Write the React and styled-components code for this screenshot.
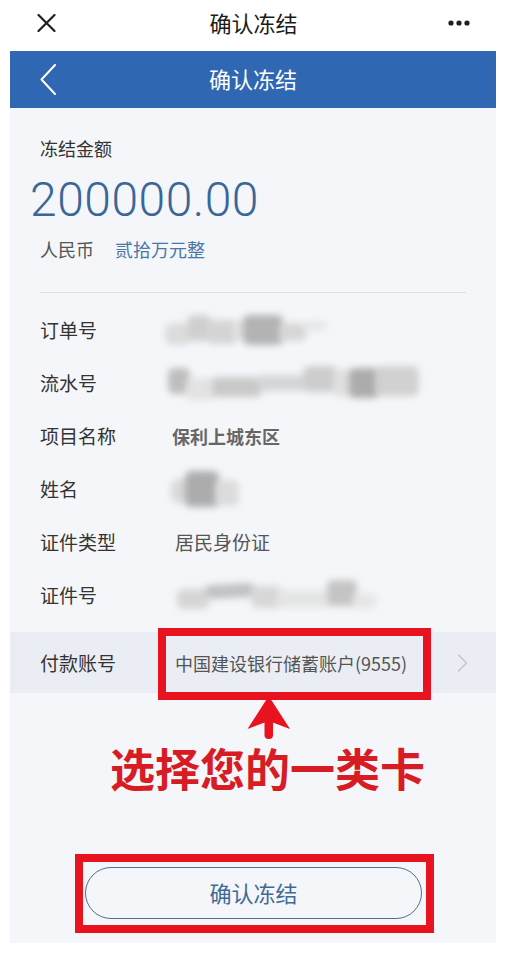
import React from "react";
import styled, { createGlobalStyle } from "styled-components";

const GlobalStyle = createGlobalStyle`
  html, body {
    margin: 0;
    padding: 0;
    background: #ffffff;
    font-family: "Noto Sans CJK SC", "Noto Sans", sans-serif;
  }
  * { box-sizing: border-box; }
`;

const Page = styled.div`
  width: 506px;
  height: 953px;
  background: #fff;
  overflow: hidden;
`;

const TopBar = styled.header`
  height: 46px;
  display: grid;
  grid-template-columns: 1fr auto 1fr;
  align-items: center;
  padding: 0 36px 0 37px;
`;

const TopTitle = styled.div`
  font-size: 22px;
  line-height: 1;
  padding-bottom: 3px;
  color: #1b1b1b;
`;

const IconSlot = styled.div`
  display: flex;
  justify-content: ${(p) => (p.$end ? "flex-end" : "flex-start")};
  align-items: center;
`;

const Frame = styled.main`
  margin: 5px 10px 0;
  background: #f4f6f9;
  padding-bottom: 10px;
`;

const NavBar = styled.nav`
  height: 57px;
  background: #2f67b2;
  display: grid;
  grid-template-columns: 60px 1fr 60px;
  align-items: center;
`;

const BackSlot = styled.div`
  padding-left: 30px;
  display: flex;
  align-items: center;
`;

const NavTitle = styled.div`
  text-align: center;
  color: #ffffff;
  font-size: 22px;
  line-height: 1;
  padding-bottom: 3px;
`;

const AmountSection = styled.section`
  padding: 27px 30px 0;
`;

const Heading = styled.div`
  font-size: 18px;
  line-height: 26px;
  color: #333;
`;

const Amount = styled.div`
  font-family: Roboto, "Liberation Sans", sans-serif;
  font-weight: 300;
  font-size: 48px;
  line-height: 56px;
  margin: 11px 0 0 -10px;
  color: #3a6698;
  letter-spacing: 0.5px;
`;

const CurrencyLine = styled.div`
  margin-top: 8px;
  display: flex;
  gap: 21px;
  font-size: 18px;
  line-height: 26px;
`;

const Currency = styled.span`
  color: ${(p) => (p.$accent ? "#4a76a8" : "#555")};
`;

const Divider = styled.hr`
  margin: 30px 30px 0;
  border: none;
  height: 1px;
  background: #dcdee2;
`;

const RowList = styled.div`
  padding-top: 10px;
  display: flex;
  flex-direction: column;
`;

const Row = styled.div`
  position: relative;
  display: grid;
  grid-template-columns: 135px 1fr auto;
  align-items: center;
  height: ${(p) => (p.$tall ? "61px" : "53px")};
  margin-top: ${(p) => (p.$tall ? "11px" : "0")};
  padding: 0 28px 0 30px;
  background: ${(p) => (p.$highlight ? "#eaedf3" : "transparent")};
`;

const Label = styled.div`
  font-size: 19px;
  line-height: 26px;
  color: #333;
`;

const Value = styled.div`
  font-size: ${(p) => (p.$small ? "18px" : "19px")};
  line-height: 26px;
  color: ${(p) => (p.$bold ? "#666" : "#555")};
  font-weight: ${(p) => (p.$bold ? 700 : 400)};
  margin-left: ${(p) => (p.$bold ? "-3px" : "0")};
  white-space: nowrap;
`;

const Redacted = styled.div`
  display: flex;
  align-items: center;
  margin-left: ${(p) => p.$shift}px;
  height: 46px;
`;

const Blob = styled.span`
  display: block;
  flex: none;
  width: ${(p) => p.$w}px;
  height: ${(p) => p.$h}px;
  margin-right: -4px;
  border-radius: 6px;
  background: ${(p) => p.$c};
  transform: translateY(${(p) => p.$dy || 0}px) rotate(${(p) => p.$r || 0}deg);
  filter: blur(3.5px);
  opacity: 0.85;
`;

const Callout = styled.div`
  position: absolute;
  left: 148px;
  top: -4px;
  width: 273px;
  height: 72px;
  border: 8px solid #e8131e;
  pointer-events: none;
`;

const ArrowMark = styled.svg`
  position: absolute;
  left: 237px;
  top: 63px;
`;

const Hint = styled.div`
  margin-top: 48px;
  text-align: center;
  padding-left: 29px;
  font-size: 45px;
  line-height: 54px;
  font-weight: 700;
  color: #d71c24;
`;

const ButtonArea = styled.div`
  margin-top: 59px;
  padding-left: 65px;
`;

const ButtonBox = styled.div`
  width: 359px;
  height: 79px;
  border: 8px solid #e8131e;
  padding: 5px 4px 6px 2px;
`;

const PillButton = styled.button`
  width: 100%;
  height: 100%;
  border: 1.5px solid #4b7099;
  border-radius: 26px;
  background: transparent;
  font-family: "Noto Sans CJK SC", sans-serif;
  font-size: 22px;
  color: #3f6a97;
  padding: 0 0 2px;
`;

const blobs = {
  order: [
    { w: 26, h: 22, c: "#d8d8d8", dy: 4 },
    { w: 24, h: 26, c: "#c9c9c9", dy: -2 },
    { w: 30, h: 24, c: "#cfcfcf", dy: 2 },
    { w: 14, h: 20, c: "#dedede" },
    { w: 40, h: 30, c: "#a8a8a8", dy: 0 },
    { w: 28, h: 18, c: "#d2d2d2", dy: 2 },
    { w: 24, h: 10, c: "#e4e4e4", dy: -4 },
  ],
  serial: [
    { w: 22, h: 26, c: "#b5b5b5", dy: -2 },
    { w: 30, h: 22, c: "#e0e0e0", dy: 6 },
    { w: 50, h: 20, c: "#c2c2c2", dy: 4 },
    { w: 49, h: 16, c: "#d0d0d0", dy: 0 },
    { w: 34, h: 26, c: "#c6c6c6", dy: -4 },
    { w: 20, h: 28, c: "#dcdcdc", dy: 0 },
    { w: 30, h: 30, c: "#a0a0a0", dy: 0 },
    { w: 44, h: 30, c: "#cbcbcb", dy: -2 },
  ],
  name: [
    { w: 18, h: 24, c: "#d4d4d4", dy: 2 },
    { w: 34, h: 36, c: "#a0a0a0", dy: 0 },
    { w: 24, h: 26, c: "#d8d8d8", dy: 4 },
  ],
  idno: [
    { w: 32, h: 20, c: "#d0d0d0", dy: 4 },
    { w: 50, h: 14, c: "#b8b8b8", dy: -4, r: -3 },
    { w: 30, h: 22, c: "#d2d2d2", dy: 2 },
    { w: 54, h: 18, c: "#e2e2e2", dy: 4 },
    { w: 30, h: 26, c: "#bcbcbc", dy: -2 },
    { w: 24, h: 16, c: "#e4e4e4", dy: 6 },
  ],
};

const Blurred = ({ items, shift = 0 }) => (
  <Redacted $shift={shift}>
    {items.map((b, i) => (
      <Blob key={i} $w={b.w} $h={b.h} $c={b.c} $dy={b.dy} $r={b.r} />
    ))}
  </Redacted>
);

const CloseIcon = () => (
  <svg width="19" height="18" viewBox="0 0 19 18">
    <path d="M1.5 1 L17.5 17 M17.5 1 L1.5 17" stroke="#1f1f1f" strokeWidth="2.2" strokeLinecap="round" />
  </svg>
);

const MoreIcon = () => (
  <svg width="22" height="6" viewBox="0 0 22 6">
    <circle cx="3" cy="3" r="2.6" fill="#1f1f1f" />
    <circle cx="11" cy="3" r="2.6" fill="#1f1f1f" />
    <circle cx="19" cy="3" r="2.6" fill="#1f1f1f" />
  </svg>
);

const BackIcon = () => (
  <svg width="16" height="31" viewBox="0 0 16 31">
    <path d="M15 1 L1.5 15.5 L15 30" stroke="#ffffff" strokeWidth="2" fill="none" strokeLinecap="round" strokeLinejoin="round" />
  </svg>
);

const ChevronRight = () => (
  <svg width="11" height="18" viewBox="0 0 11 18">
    <path d="M1.5 1 L9.5 9 L1.5 17" stroke="#c3c5ca" strokeWidth="1.5" fill="none" strokeLinecap="round" strokeLinejoin="round" />
  </svg>
);

const UpArrow = () => (
  <ArrowMark width="44" height="46" viewBox="0 0 44 46">
    <rect x="17.5" y="22" width="8.5" height="22" rx="4" fill="#e8131e" />
    <path d="M21.7 1 L43 34 L21.7 26 L0.5 34 Z" fill="#e8131e" />
  </ArrowMark>
);

export default function App() {
  return (
    <Page>
      <GlobalStyle />
      <TopBar>
        <IconSlot>
          <CloseIcon />
        </IconSlot>
        <TopTitle>确认冻结</TopTitle>
        <IconSlot $end>
          <MoreIcon />
        </IconSlot>
      </TopBar>
      <Frame>
        <NavBar>
          <BackSlot>
            <BackIcon />
          </BackSlot>
          <NavTitle>确认冻结</NavTitle>
          <div />
        </NavBar>

        <AmountSection>
          <Heading>冻结金额</Heading>
          <Amount>200000.00</Amount>
          <CurrencyLine>
            <Currency>人民币</Currency>
            <Currency $accent>贰拾万元整</Currency>
          </CurrencyLine>
        </AmountSection>

        <Divider />

        <RowList>
          <Row>
            <Label>订单号</Label>
            <Blurred items={blobs.order} shift={-10} />
          </Row>
          <Row>
            <Label>流水号</Label>
            <Blurred items={blobs.serial} shift={-7} />
          </Row>
          <Row>
            <Label>项目名称</Label>
            <Value $bold $small>保利上城东区</Value>
          </Row>
          <Row>
            <Label>姓名</Label>
            <Blurred items={blobs.name} shift={-4} />
          </Row>
          <Row>
            <Label>证件类型</Label>
            <Value>居民身份证</Value>
          </Row>
          <Row>
            <Label>证件号</Label>
            <Blurred items={blobs.idno} shift={2} />
          </Row>
          <Row $tall $highlight>
            <Label>付款账号</Label>
            <Value $small>中国建设银行储蓄账户(9555)</Value>
            <ChevronRight />
            <Callout />
            <UpArrow />
          </Row>
        </RowList>

        <Hint>选择您的一类卡</Hint>

        <ButtonArea>
          <ButtonBox>
            <PillButton type="button">确认冻结</PillButton>
          </ButtonBox>
        </ButtonArea>
      </Frame>
    </Page>
  );
}
